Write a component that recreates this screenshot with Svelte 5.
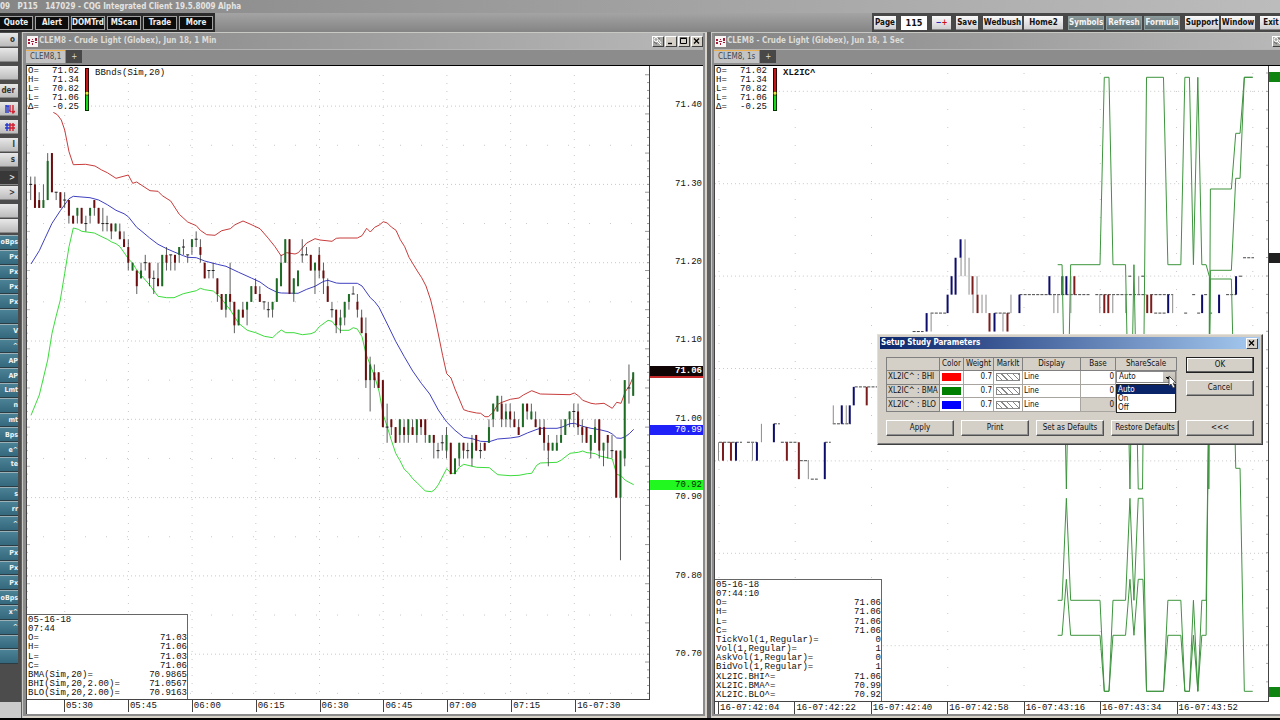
<script lang="ts">
  type Point = [number, number];
  // open, close, high, low in cents above 70.00
  type Bar = [number, number, number, number];

  const MENU = ['Quote', 'Alert', 'DOMTrd', 'MScan', 'Trade', 'More'];

  const SIDE_BUTTONS = [
    { label: 'o' },
    { label: '' },
    { label: '', gap: true },
    { label: 'der', gap: true },
    { label: '', icon: 'arrows', gap: true },
    { label: '', icon: 'hash', gap: true },
    { label: 'l', gap: true },
    { label: 's' },
    { label: '>', dark: true, gap: true },
    { label: '>' },
    { label: '', gap: true },
    { label: '' },
  ];

  const STUDIES = [
    'oBps', 'Px', 'Px', 'Px', 'Px', '', 'V', '^', 'AP', 'AP', 'Lmt', 'n', 'mt', 'Bps', 'e^',
    'te', '', 's', 'rr', '^', '', 'Px', 'Px', 'Px', 'oBps', 'x^', '^', '', '',
  ];

  const QUOTE = [
    ['O=', '71.02'],
    ['H=', '71.34'],
    ['L=', '70.82'],
    ['L=', '71.06'],
    ['Δ=', '-0.25'],
  ];

  const READOUT_MIN = [
    ['05-16-18', ''],
    ['07:44', ''],
    ['O=', '71.03'],
    ['H=', '71.06'],
    ['L=', '71.03'],
    ['C=', '71.06'],
    ['BMA(Sim,20)=', '70.9865'],
    ['BHI(Sim,20,2.00)=', '71.0567'],
    ['BLO(Sim,20,2.00)=', '70.9163'],
  ];

  const READOUT_SEC = [
    ['05-16-18', ''],
    ['07:44:10', ''],
    ['O=', '71.06'],
    ['H=', '71.06'],
    ['L=', '71.06'],
    ['C=', '71.06'],
    ['TickVol(1,Regular)=', '0'],
    ['Vol(1,Regular)=', '1'],
    ['AskVol(1,Regular)=', '0'],
    ['BidVol(1,Regular)=', '1'],
    ['XL2IC.BHI^=', '71.06'],
    ['XL2IC.BMA^=', '70.99'],
    ['XL2IC.BLO^=', '70.92'],
  ];

  const TIMES_MIN = ['05:30', '05:45', '06:00', '06:15', '06:30', '06:45', '07:00', '07:15', '16-07:30'];
  const TIMES_SEC = ['42:04', '42:22', '42:40', '42:58', '43:16', '43:34', '43:52'];

  const BARS: Bar[] = [
    [130, 130, 131, 128], [130, 127, 131, 127], [128, 127, 129, 127], [127, 128, 130, 127],
    [128, 133, 134, 128], [134, 129, 134, 129], [129, 129, 129, 128], [129, 127, 129, 127],
    [128, 128, 129, 127], [128, 126, 128, 125], [126, 125, 126, 125], [126, 127, 127, 125],
    [127, 125, 127, 125], [125, 125, 126, 124], [126, 127, 127, 125], [128, 127, 128, 126],
    [127, 125, 127, 125], [125, 125, 127, 124], [125, 125, 126, 124], [125, 124, 125, 123],
    [124, 125, 125, 124], [124, 123, 125, 123], [123, 122, 124, 122], [122, 120, 123, 119],
    [119, 120, 120, 119], [119, 117, 119, 116], [118, 119, 120, 118], [120, 120, 121, 119],
    [120, 118, 120, 117], [118, 118, 119, 116], [118, 117, 120, 117], [117, 121, 121, 117],
    [121, 120, 122, 119], [121, 121, 121, 119], [121, 120, 121, 119], [121, 122, 122, 120],
    [122, 122, 123, 121], [121, 121, 121, 120], [122, 123, 123, 121], [123, 123, 124, 122],
    [122, 121, 123, 120], [120, 118, 120, 118], [119, 119, 119, 118], [119, 119, 120, 118],
    [118, 116, 118, 115], [116, 114, 116, 114], [114, 116, 116, 113], [116, 115, 120, 114],
    [115, 112, 115, 111], [112, 114, 114, 112], [114, 113, 115, 113], [114, 115, 115, 112],
    [115, 117, 117, 115], [117, 116, 118, 116], [116, 115, 117, 115], [115, 115, 115, 114],
    [114, 114, 115, 113], [114, 115, 115, 113], [115, 118, 118, 115], [117, 120, 121, 117],
    [120, 123, 123, 120], [123, 116, 123, 116], [116, 118, 118, 115], [117, 119, 119, 117],
    [121, 121, 123, 120], [121, 121, 122, 121], [121, 119, 121, 119], [119, 120, 120, 116],
    [121, 119, 122, 118], [119, 118, 120, 116], [117, 115, 118, 115], [114, 114, 115, 113],
    [114, 112, 114, 111], [112, 113, 114, 111], [113, 115, 115, 112], [115, 116, 116, 114],
    [116, 116, 117, 116], [115, 114, 116, 113], [113, 111, 114, 111], [111, 105, 113, 104],
    [105, 107, 108, 101], [106, 105, 107, 104], [106, 104, 106, 104], [105, 99, 105, 99],
    [99, 99, 102, 97], [100, 99, 100, 98], [99, 97, 99, 97], [98, 100, 100, 97],
    [99, 98, 100, 97], [98, 100, 100, 97], [99, 98, 100, 98], [98, 100, 100, 97],
    [100, 99, 100, 98], [100, 98, 100, 97], [97, 98, 98, 97], [98, 97, 98, 95],
    [96, 96, 97, 95], [97, 97, 98, 96], [96, 98, 99, 95], [97, 93, 97, 93],
    [93, 95, 95, 93], [95, 97, 97, 94], [97, 96, 97, 95], [96, 96, 97, 95],
    [95, 97, 98, 94], [98, 96, 98, 96], [96, 96, 97, 95], [97, 96, 97, 96],
    [97, 99, 100, 97], [100, 102, 102, 99], [101, 103, 103, 101], [102, 100, 103, 99],
    [100, 101, 102, 99], [101, 100, 102, 99], [100, 99, 101, 99], [99, 98, 100, 98],
    [99, 102, 102, 99], [102, 101, 102, 100], [100, 101, 102, 100], [100, 99, 101, 99],
    [99, 98, 100, 98], [99, 97, 100, 96], [97, 96, 98, 94], [96, 97, 97, 96],
    [96, 97, 98, 96], [97, 98, 100, 97], [98, 100, 100, 98], [100, 101, 101, 99],
    [101, 101, 102, 99], [101, 99, 102, 98], [99, 98, 100, 97], [99, 97, 99, 97],
    [96, 98, 98, 95], [97, 99, 100, 97], [100, 96, 100, 95], [96, 97, 97, 94],
    [98, 97, 98, 95], [96, 96, 98, 95], [96, 90, 96, 90], [90, 96, 96, 82],
    [95, 105, 105, 94], [104, 104, 107, 102], [103, 106, 106, 103],
  ];

  // Band points are kept at three units per plot pixel, split at 06:33
  const BHI_EARLY: Point[] = [
    [100, 7], [112, 14], [124, 30], [134, 60], [147, 125], [160, 164], [197, 163], [225, 168],
    [245, 180], [262, 188], [288, 205], [325, 195], [338, 220], [350, 216], [390, 242], [414, 244],
    [427, 257], [452, 273], [478, 313], [503, 336], [529, 347], [541, 361], [560, 374], [585, 376],
    [605, 362], [631, 356], [645, 344], [669, 333], [690, 342], [720, 356], [745, 385], [765, 410],
    [783, 437], [800, 428], [825, 432], [835, 428], [860, 399], [885, 386], [900, 390], [936, 394],
    [949, 385],
  ];
  const BHI_LATE: Point[] = [
    [0, 84], [52, 84], [66, 77], [80, 55], [91, 66], [104, 52], [118, 45], [130, 35], [142, 39],
    [154, 51], [168, 61], [181, 89], [194, 110], [207, 142], [232, 183], [245, 203], [258, 228],
    [272, 270], [283, 315], [295, 372], [308, 437], [320, 491], [333, 504], [345, 537], [371, 599],
    [385, 604], [410, 609], [422, 610], [435, 620], [445, 620], [460, 607], [473, 583], [486, 577],
    [511, 568], [537, 564], [550, 555], [575, 542], [601, 552], [690, 554], [703, 549], [716, 558],
    [728, 571], [753, 580], [767, 582], [792, 580], [817, 595], [830, 577], [843, 580], [856, 545],
    [868, 528], [881, 498],
  ];
  const BMA_EARLY: Point[] = [
    [33, 462], [58, 422], [75, 385], [96, 340], [121, 302], [147, 266], [160, 259], [210, 263],
    [236, 270], [262, 284], [288, 301], [312, 311], [325, 320], [350, 352], [363, 362], [389, 384],
    [414, 403], [440, 416], [465, 427], [490, 437], [503, 442], [529, 443], [554, 453], [592, 463],
    [618, 469], [656, 487], [694, 504], [720, 516], [745, 534], [771, 547], [784, 549], [834, 550],
    [860, 538], [885, 529], [911, 514], [924, 511], [949, 519],
  ];
  const BMA_LATE: Point[] = [
    [0, 220], [52, 220], [66, 228], [91, 263], [104, 275], [117, 292], [142, 342], [167, 394],
    [193, 440], [218, 483], [244, 520], [269, 552], [295, 600], [320, 636], [345, 661], [371, 682],
    [397, 686], [422, 694], [448, 695], [473, 687], [511, 684], [537, 680], [562, 669], [588, 659],
    [601, 655], [651, 655], [664, 652], [690, 641], [703, 640], [728, 649], [753, 655], [779, 659],
    [804, 665], [817, 672], [830, 684], [843, 685], [856, 680], [868, 671], [881, 658],
  ];
  const BLO_EARLY: Point[] = [
    [33, 916], [58, 855], [83, 750], [96, 670], [108, 620], [121, 570], [134, 490], [147, 410],
    [160, 354], [175, 358], [185, 364], [223, 369], [249, 382], [262, 388], [275, 396], [288, 401],
    [300, 410], [325, 446], [338, 460], [350, 480], [389, 525], [414, 559], [440, 563], [462, 563],
    [490, 551], [529, 542], [541, 535], [554, 539], [580, 543], [600, 561], [631, 600], [656, 640],
    [682, 661], [707, 668], [733, 679], [758, 683], [771, 670], [784, 660], [797, 668], [822, 668],
    [847, 674], [873, 671], [885, 666], [898, 650], [924, 631], [936, 634], [949, 650],
  ];
  const BLO_LATE: Point[] = [
    [0, 361], [27, 361], [40, 353], [52, 357], [66, 380], [78, 432], [91, 465], [104, 500],
    [117, 543], [130, 615], [142, 651], [154, 690], [167, 730], [180, 752], [193, 778], [206, 790],
    [218, 806], [231, 818], [256, 843], [275, 845], [285, 838], [295, 824], [320, 776], [333, 790],
    [345, 790], [358, 772], [371, 763], [410, 772], [448, 773], [473, 794], [511, 797], [537, 796],
    [562, 791], [575, 790], [590, 766], [601, 759], [651, 757], [664, 750], [690, 730], [715, 727],
    [728, 723], [741, 728], [753, 729], [766, 731], [779, 738], [817, 747], [830, 793], [843, 797],
    [856, 811], [881, 824],
  ];

  // One-second study lines, same three units per pixel
  const XL_HIGH: Point[] = [
    [82, 614], [95, 614], [108, 1287], [121, 614], [209, 614], [222, 52], [236, 52], [248, 614],
    [286, 614], [299, 1287], [311, 614], [324, 1287], [337, 1287], [349, 52], [400, 52], [413, 614],
    [452, 614], [464, 52], [478, 52], [490, 614], [503, 52], [515, 614], [528, 614], [538, 650],
    [536, 1287], [541, 387], [604, 387], [617, 220], [630, 220], [643, 52], [668, 52],
  ];
  const XL_MID: Point[] = [
    [82, 1726], [95, 1726], [108, 1558], [121, 1726], [209, 1726], [222, 1894], [236, 1894],
    [248, 1726], [286, 1726], [299, 1558], [311, 1726], [324, 1558], [338, 1558], [349, 1894],
    [400, 1894], [413, 1726], [452, 1726], [464, 1894], [478, 1894], [490, 1726], [503, 1894],
    [515, 1726], [528, 1726], [541, 631], [604, 631], [617, 355], [630, 355], [643, 52], [668, 52],
  ];
  const XL_LOW: Point[] = [
    [82, 1621], [95, 1621], [108, 1315], [121, 1621], [209, 1621], [222, 1894], [236, 1894],
    [248, 1621], [286, 1621], [299, 1315], [311, 1621], [324, 1315], [338, 1315], [349, 1894],
    [400, 1894], [413, 1621], [452, 1621], [464, 1894], [478, 1894], [490, 1621], [503, 1894],
    [515, 1621], [528, 1621], [541, 657], [604, 657], [617, 1225], [630, 1225], [643, 1894],
    [668, 1894],
  ];

  // x, top level, bottom level, colour key
  const SEC_BARS: [number, number, number, string][] = [
    [717, 11, 12, 'g'], [721, 11, 12, 'r'], [729, 11, 12, 'r'], [734, 11, 12, 'b'],
    [751, 11, 12, 'g'], [755, 11, 12, 'b'], [760, 10, 11, 'g'], [772, 10, 11, 'b'],
    [785, 11, 12, 'r'], [797, 11, 13, 'r'], [807, 12, 13, 'g'], [823, 11, 13, 'b'],
    [832, 9, 10, 'g'], [840, 9, 10, 'b'], [845, 9, 10, 'g'], [848, 9, 10, 'b'],
    [852, 8, 9, 'b'], [865, 8, 9, 'r'], [925, 4, 5, 'b'], [930, 4, 5, 'g'],
    [946, 3, 4, 'b'], [950, 2, 3, 'b'], [954, 1, 3, 'b'], [959, 0, 1, 'b'],
    [960, 1, 2, 'g'], [964, 0, 2, 'g'], [968, 1, 3, 'g'], [971, 2, 3, 'r'],
    [972, 3, 4, 'g'], [976, 2, 3, 'g'], [976, 3, 4, 'r'], [981, 3, 4, 'g'],
    [985, 3, 4, 'g'], [988, 4, 5, 'r'], [993, 4, 5, 'b'], [1002, 4, 5, 'g'],
    [1006, 4, 5, 'r'], [1010, 3, 4, 'g'], [1018, 3, 4, 'b'], [1048, 2, 3, 'b'],
    [1053, 3, 4, 'g'], [1057, 3, 4, 'g'], [1061, 2, 3, 'b'], [1065, 2, 3, 'b'],
    [1070, 2, 4, 'g'], [1073, 2, 3, 'r'], [1099, 3, 4, 'g'], [1103, 3, 4, 'r'],
    [1107, 3, 4, 'r'], [1112, 3, 4, 'g'], [1125, 3, 4, 'g'], [1138, 2, 3, 'g'],
    [1146, 3, 4, 'r'], [1150, 3, 4, 'r'], [1167, 3, 4, 'b'], [1172, 3, 4, 'g'],
    [1201, 3, 4, 'b'], [1218, 3, 4, 'b'], [1235, 2, 3, 'b'],
  ];
  const SEC_COLORS: Record<string, string> = { r: '#7c1c1c', b: '#0c0c6c', g: '#8c8c8c' };

  // runs of unchanged prices: from, to, level
  const FLATS: [number, number, number][] = [
    [718, 741, 11], [746, 756, 11], [773, 779, 10], [780, 797, 11], [799, 808, 12],
    [810, 817, 13], [824, 830, 11], [832, 850, 10], [854, 878, 8], [912, 923, 5],
    [930, 946, 4], [994, 1010, 4], [1019, 1090, 3], [1095, 1146, 3], [1150, 1173, 3],
    [1192, 1196, 3], [1204, 1208, 3], [1226, 1236, 3], [1154, 1166, 4], [1184, 1187, 4],
    [1197, 1201, 4], [1210, 1212, 4], [1128, 1131, 2], [1141, 1145, 2], [1239, 1242, 2],
    [1243, 1254, 1],
  ];

  const PLOT_TOP = 66;
  const PLOT_HEIGHT = 633;

  const barX = (n: number) => 30.7 + n * 4.243;
  const priceY = (cents: number) => 419.3 + (100 - cents) * 7.83;
  const levelY = (level: number) => 239.3 + level * 18.45;
  const fromTop = (y: number) => `${((y - PLOT_TOP) / PLOT_HEIGHT) * 100}%`;

  function trace(points: Point[], left: number, top: number): string {
    return points.map(([x, y]) => `${(left + x / 3).toFixed(1)},${(top + y / 3).toFixed(1)}`).join(' ');
  }

  const bands = [
    { color: '#c83c3c', points: trace(BHI_EARLY, 20, 110) + ' ' + trace(BHI_LATE, 340, 210) },
    { color: '#4040c0', points: trace(BMA_EARLY, 20, 110) + ' ' + trace(BMA_LATE, 340, 210) },
    { color: '#3cdc3c', points: trace(BLO_EARLY, 20, 110) + ' ' + trace(BLO_LATE, 340, 210) },
  ];

  const priceLabels = [140, 130, 120, 110, 100, 90, 80, 70];
  const markers = [
    { text: '71.06', y: 372, kind: 'last' },
    { text: '70.99', y: 429, kind: 'mid' },
    { text: '70.92', y: 484, kind: 'low' },
  ];

  const params = [
    { name: 'XL2IC^ : BHI', color: '#ff0000' },
    { name: 'XL2IC^ : BMA', color: '#008000' },
    { name: 'XL2IC^ : BLO', color: '#0000ff' },
  ];
  const SCALES = ['Auto', 'On', 'Off'];

  let page = $state('115');
  let scale = $state('Auto');
</script>

{#snippet logo()}
  <svg class="logo" viewBox="0 0 11 11" aria-hidden="true">
    <rect width="11" height="11" fill="#f8f4f4" />
    <path d="M1 3h2v2H1zM1 6h2v2H1zM4 5h3v1H4zM5 3h1v1H5zM8 2h2v3H8zM5 7h1v2H5zM8 6h2v1H8z" fill="#a81838" />
  </svg>
{/snippet}

{#snippet pin()}
  <svg viewBox="0 0 11 10" aria-hidden="true">
    <circle cx="4" cy="3.5" r="2" fill="none" stroke="#fff" />
    <path d="M5 5l4 4M7 4l2 3" fill="none" stroke="#fff" />
    <path d="M2 6l3 2M6 2l2 1" stroke="#666" />
  </svg>
{/snippet}

{#snippet quoteBox()}
  <div class="quote">
    <div class="quote-rows">
      {#each QUOTE as [label, value]}
        <div class="pair"><span>{label}</span><span>{value}</span></div>
      {/each}
    </div>
    <svg class="range" viewBox="0 0 4 43" aria-hidden="true">
      <rect x="0.5" y="0.5" width="3" height="42" fill="#c01818" stroke="#300" />
      <rect x="0.5" y="25.5" width="3" height="17" fill="#18d818" stroke="#030" />
      <path d="M0 25l2-2 2 2-2 3z" fill="#e8e840" stroke="#330" stroke-width="0.6" />
    </svg>
  </div>
{/snippet}

{#snippet readout(rows: string[][])}
  {#each rows as [label, value]}
    <div class="pair"><span>{label}</span><span>{value}</span></div>
  {/each}
{/snippet}

<div class="client">
  <header class="titlebar">09&nbsp;&nbsp; P115&nbsp;&nbsp; 147029 - CQG Integrated Client 19.5.8009 Alpha</header>

  <nav class="toolbar">
    <div class="menu">
      {#each MENU as item}
        <button>{item}</button>
      {/each}
    </div>
    <div class="tools">
      <button class="narrow">Page</button>
      <input class="page" aria-label="Page number" bind:value={page} />
      <button class="step" aria-label="Step page"><span class="minus">−</span><span class="plus">+</span></button>
      <button class="narrow">Save</button>
      <span class="pack">
        <button>Wedbush</button>
        <button>Home2</button>
      </span>
      <span class="pack slate">
        <button>Symbols</button>
        <button>Refresh</button>
        <button>Formula</button>
      </span>
      <span class="pack plain">
        <button>Support</button>
        <button>Window</button>
      </span>
      <button class="narrow">Exit</button>
    </div>
  </nav>

  <main class="desk">
    <aside class="side">
      <div class="side-top">
        {#each SIDE_BUTTONS as item}
          <button class="side-button" class:gap={item.gap} class:dark={item.dark} aria-label={item.label || 'Tool'}>
            {#if item.icon === 'arrows'}
              <svg viewBox="0 0 10 10" aria-hidden="true">
                <path d="M1 1v8M3 2v7M1 2h3" stroke="#2438d0" stroke-width="1.4" fill="none" />
                <path d="M5 1v7M8 1v8M4 6l2 2M7 7l1 2 2-2" stroke="#d02030" stroke-width="1.4" fill="none" />
              </svg>
            {:else if item.icon === 'hash'}
              <svg viewBox="0 0 10 10" aria-hidden="true">
                <path d="M2 1v8M0 3h5M0 6h5" stroke="#2438d0" stroke-width="1.4" fill="none" />
                <path d="M5 1v8M8 1v8M4 3h6M4 6h6" stroke="#d02030" stroke-width="1.4" fill="none" />
              </svg>
            {:else}
              {item.label}
            {/if}
          </button>
        {/each}
      </div>
      <div class="studies">
        {#each STUDIES as study}
          <button class="study" aria-label={study || 'Study'}>{study}</button>
        {/each}
      </div>
      <div class="side-end"></div>
    </aside>

    <section class="window">
      <div class="caption">
        {@render logo()}
        <h2>CLEM8 - Crude Light (Globex), Jun 18, 1 Min</h2>
        <div class="controls">
          <button class="pin" aria-label="Pin">{@render pin()}</button>
          <button aria-label="Minimize"><svg viewBox="0 0 11 10"><path d="M3 7.5h4" stroke="#000" stroke-width="1.4" /></svg></button>
          <button aria-label="Maximize"><svg viewBox="0 0 11 10"><path d="M2.5 2.5h6v5h-6zM2 2h7" fill="none" stroke="#000" /></svg></button>
          <button aria-label="Close"><svg viewBox="0 0 11 10"><path d="M3 2.5l5 5M8 2.5l-5 5" stroke="#000" stroke-width="1.3" /></svg></button>
        </div>
      </div>
      <div class="tabs">
        <button class="tab">CLEM8,1</button>
        <button class="add">+</button>
      </div>
      <div class="chart">
        <div class="plot">
          <svg class="canvas" viewBox="27 66 622 633" preserveAspectRatio="none" aria-label="One minute candles">
            {#each priceLabels as cents}
              <line x1="27" x2="649" y1={priceY(cents)} y2={priceY(cents)} class="grid" />
              <line x1="43" x2="649" y1={priceY(cents - 5)} y2={priceY(cents - 5)} class="grid sparse" />
            {/each}
            {#each TIMES_MIN as _, i}
              <line x1={64.7 + i * 63.7} x2={64.7 + i * 63.7} y1="75" y2="699" class="grid upright" />
            {/each}
            {#each { length: 81 } as _, i}
              <line x1={i % 5 ? 647 : 645} x2="649" y1={priceY(144 - i)} y2={priceY(144 - i)} stroke="#999" />
              <line x1="27" x2={i % 5 ? 28 : 30} y1={priceY(144 - i)} y2={priceY(144 - i)} stroke="#bbb" />
            {/each}
            {#each bands as band}
              <polyline points={band.points} fill="none" stroke={band.color} />
            {/each}
            {#each BARS as [open, close, high, low], n}
              <line x1={barX(n)} x2={barX(n)} y1={priceY(high)} y2={priceY(low)} stroke="#333" stroke-width="0.8" />
              {#if open === close}
                <line x1={barX(n) - 1.5} x2={barX(n) + 1.5} y1={priceY(open)} y2={priceY(open)} stroke="#222" />
              {:else}
                <rect
                  x={barX(n) - 1}
                  y={priceY(Math.max(open, close))}
                  width="2"
                  height={Math.abs(open - close) * 7.83}
                  fill={close > open ? '#1c6c24' : '#6c0c0c'}
                />
              {/if}
            {/each}
          </svg>
          {@render quoteBox()}
          <div class="study-name">BBnds(Sim,20)</div>
          <div class="readout minute">{@render readout(READOUT_MIN)}</div>
        </div>
        <div class="prices">
          {#each priceLabels as cents}
            <span class="price" style:top={fromTop(priceY(cents) - 1)}>{(70 + cents / 100).toFixed(2)}</span>
          {/each}
          {#each markers as marker}
            <span class="price marker {marker.kind}" style:top={fromTop(marker.y)}>{marker.text}</span>
          {/each}
        </div>
        <div class="times minute-times">
          {#each TIMES_MIN as time}
            <span>{time}</span>
          {/each}
        </div>
      </div>
    </section>

    <section class="window second">
      <div class="caption">
        {@render logo()}
        <h2>CLEM8 - Crude Light (Globex), Jun 18, 1 Sec</h2>
        <div class="controls">
          <button class="pin" aria-label="Pin">{@render pin()}</button>
        </div>
      </div>
      <div class="tabs">
        <button class="tab">CLEM8, 1s</button>
        <button class="add">+</button>
      </div>
      <div class="chart">
        <div class="plot">
          <svg class="canvas" viewBox="714 66 554 635" preserveAspectRatio="none" aria-label="One second bars">
            {#each { length: 7 } as _, i}
              <line x1="714" x2="1268" y1={91.3 + i * 92.4} y2={91.3 + i * 92.4} class="grid" />
            {/each}
            {#each { length: 8 } as _, i}
              <line x1={718 + i * 76.4} x2={718 + i * 76.4} y1="73" y2="701" class="grid levels" />
            {/each}
            {#each { length: 34 } as _, i}
              <line x1="1266" x2="1268" y1={73 + i * 18.45} y2={73 + i * 18.45} stroke="#aaa" />
            {/each}
            {#each FLATS as [from, to, level]}
              <line x1={from} x2={to} y1={levelY(level)} y2={levelY(level)} stroke="#444" stroke-dasharray="3 1.2" />
            {/each}
            {#each SEC_BARS as [x, top, bottom, color]}
              <rect
                {x}
                y={levelY(top)}
                width={color === 'g' ? 1 : 2}
                height={levelY(bottom) - levelY(top)}
                fill={SEC_COLORS[color]}
              />
            {/each}
            {#each [XL_HIGH, XL_MID, XL_LOW] as line}
              <polyline points={trace(line, 1030, 60)} fill="none" stroke="#3c943c" />
            {/each}
          </svg>
          {@render quoteBox()}
          <div class="study-name heavy">XL2IC^</div>
          <div class="readout seconds">{@render readout(READOUT_SEC)}</div>
        </div>
        <div class="prices">
          <span class="price marker study-mark" style:top={fromTop(77)}></span>
          <span class="price marker dark-mark" style:top={fromTop(257)}></span>
          <span class="price marker study-mark" style:top={fromTop(689)}></span>
        </div>
        <div class="times second-times">
          {#each TIMES_SEC as time}
            <span>16-07:{time}</span>
          {/each}
        </div>
      </div>
    </section>
  </main>

  <div class="dialog" role="dialog" aria-labelledby="dialog-title">
    <div class="dialog-caption">
      <h2 id="dialog-title">Setup Study Parameters</h2>
      <button aria-label="Close"><svg viewBox="0 0 11 10"><path d="M3 2.5l5 5M8 2.5l-5 5" stroke="#000" stroke-width="1.3" /></svg></button>
    </div>
    <div class="dialog-body">
      <table>
        <thead>
          <tr>
            <th class="name"></th>
            <th class="color">Color</th>
            <th class="weight">Weight</th>
            <th class="mark">MarkIt</th>
            <th class="display">Display</th>
            <th class="base">Base</th>
            <th>ShareScale</th>
          </tr>
        </thead>
        <tbody>
          {#each params as param, i}
            <tr>
              <th scope="row">{param.name}</th>
              <td><span class="swatch" style:background={param.color}></span></td>
              <td class="number">0.7</td>
              <td><span class="hatch"></span></td>
              <td>Line</td>
              <td class="number" class:disabled={i === 2}>0</td>
              {#if i === 0}
                <td class="scale-cell">
                  <select aria-label="ShareScale" bind:value={scale}>
                    {#each SCALES as option}
                      <option>{option}</option>
                    {/each}
                  </select>
                  <ul class="options">
                    {#each SCALES as option}
                      <li class:selected={option === scale}>{option}</li>
                    {/each}
                  </ul>
                  <svg class="cursor" viewBox="0 0 9 14" aria-hidden="true">
                    <path d="M1 1v10l2-2 2 4 2-1-2-4h3z" fill="#fff" stroke="#333" stroke-width="0.8" />
                  </svg>
                </td>
              {:else}
                <td></td>
              {/if}
            </tr>
          {/each}
        </tbody>
      </table>
      <div class="answers">
        <button class="default">OK</button>
        <button>Cancel</button>
      </div>
    </div>
    <div class="actions">
      <button>Apply</button>
      <button>Print</button>
      <button>Set as Defaults</button>
      <button>Restore Defaults</button>
      <button>&lt;&lt;&lt;</button>
    </div>
  </div>
</div>

<style>
  :global(body) {
    margin: 0;
    overflow: hidden;
    background: #000;
  }

  .client {
    position: relative;
    display: flex;
    flex-direction: column;
    height: 100vh;
    overflow: hidden;
    background: #3c3c3c;
    font-family: "DejaVu Sans Condensed", "Noto Sans", sans-serif;
    font-size: 8px;
    line-height: 10px;
    color: #111;
  }

  .client * {
    box-sizing: border-box;
  }

  button,
  input,
  select {
    margin: 0;
    padding: 0;
    border: 0;
    border-radius: 0;
    font: inherit;
    color: inherit;
    white-space: nowrap;
  }

  h2 {
    margin: 0;
    font-size: inherit;
  }

  .titlebar {
    height: 13px;
    flex: none;
    line-height: 13px;
    font-weight: bold;
    color: #e4e4e0;
    white-space: nowrap;
    background: linear-gradient(90deg, #868686, #bcbcbc);
  }

  .toolbar {
    display: flex;
    flex: none;
    height: 19px;
    font-weight: bold;
    background: linear-gradient(#a4a4a4, #848484);
  }

  .menu {
    display: flex;
    gap: 2px;
    padding: 3px 2px 2px 0;
    background: #2c2c2c;
  }

  .menu button {
    width: 34px;
    color: #f0f0f0;
    background: #0c0c0c;
    border: 1px solid #a0a0a0;
  }

  .menu button:first-child {
    width: 33px;
    border-left: 0;
  }

  .tools {
    display: flex;
    gap: 5px;
    padding: 3px 2px 2px;
    margin: 0 -4px 0 auto;
    background: #484848;
  }

  .tools button {
    width: 39px;
    height: 14px;
    background: linear-gradient(#fafafa, #cfcfd2);
    border-bottom: 1px solid #888;
  }

  .tools .narrow {
    width: 22px;
  }

  .tools .page {
    width: 26px;
    height: 14px;
    text-align: center;
    font-size: 9px;
    background: #fff;
  }

  .tools .step {
    width: 19px;
  }

  .minus {
    color: #2828c0;
  }

  .plus {
    color: #d01010;
  }

  .pack {
    display: flex;
    gap: 2px;
  }

  .pack.slate button {
    width: 36px;
    color: #f4f4f4;
    background: linear-gradient(#8a9898, #5c6e72);
    border: 1px solid #8c9c9c;
  }

  .pack.plain button {
    width: 34px;
  }

  .desk {
    display: grid;
    grid-template-columns: 21px minmax(0, 689fr) minmax(0, 570fr);
    flex: 1;
    min-height: 0;
    padding-bottom: 2px;
    background: #000;
  }

  .side {
    display: flex;
    flex-direction: column;
    padding-right: 3px;
    font-weight: bold;
    background: #4c4c4c;
  }

  .side-top {
    display: flex;
    flex-direction: column;
    gap: 1px;
    padding-top: 1px;
  }

  .side button {
    display: flex;
    align-items: center;
    justify-content: flex-end;
    width: 18px;
    text-align: right;
  }

  .side-button {
    height: 14px;
    padding-right: 3px;
    color: #333;
    background: linear-gradient(#e8e8e8, #bcbcbc);
    border-bottom: 1px solid #888;
  }

  .side-button.gap {
    margin-top: 3px;
  }

  .side-button.dark {
    color: #ddd;
    background: #383838;
  }

  .side-button svg {
    width: 10px;
    height: 10px;
    flex: none;
  }

  .studies {
    display: flex;
    flex-direction: column;
    height: 429px;
    margin-top: 2px;
  }

  .study {
    flex: 1;
    font-size: 7px;
    color: #f0f4f6;
    background: linear-gradient(#4c8296, #34687c);
    border-top: 1px solid #9cb0b8;
    border-bottom: 1px solid #2c3c44;
  }

  .side-end {
    height: 16px;
    margin: auto -3px 0 0;
    background: #cacaca;
  }

  .window {
    display: flex;
    flex-direction: column;
    min-width: 0;
    padding: 1px 4px 4px;
    background: #8c8c8c;
    border: 1px solid #606060;
    border-width: 0 3px 0 1px;
    box-shadow: inset 1px 1px 0 #c8c8c4, inset -2px -2px 0 #d8d4cc;
  }

  .second {
    padding: 1px 0 4px 3px;
    border-right: 0;
    box-shadow: inset 1px 1px 0 #c8c8c4, inset 0 -2px 0 #d8d4cc;
    overflow: hidden;
  }

  .caption {
    display: flex;
    align-items: center;
    gap: 1px;
    height: 17px;
    flex: none;
    padding-left: 1px;
    border-bottom: 1px solid #b4b4b4;
    background: linear-gradient(90deg, #848484, #b8b8b8);
    color: #dcdcd8;
    white-space: nowrap;
  }

  .logo {
    width: 11px;
    height: 11px;
  }

  .controls {
    display: flex;
    gap: 2px;
    margin-left: auto;
    padding-right: 1px;
  }

  .second .controls {
    margin-right: -4px;
  }

  .controls button,
  .dialog-caption button {
    display: flex;
    width: 11px;
    height: 10px;
    background: #d4d0c8;
    box-shadow: 1px 1px 0 #404040, inset 1px 1px 0 #fff;
  }

  .controls .pin {
    background: #a8a8a4;
  }

  .tabs {
    display: flex;
    align-items: flex-end;
    gap: 1px;
    flex: none;
    height: 15px;
    padding-bottom: 2px;
  }

  .tab {
    height: 13px;
    padding: 0 4px;
    color: #404850;
    background: #c4c4c4;
    border-top: 1px solid #e8b050;
  }

  .add {
    width: 16px;
    height: 13px;
    color: #ddd;
    background: #484848;
  }

  .chart {
    display: grid;
    grid-template-columns: minmax(0, 1fr) 53px;
    grid-template-rows: minmax(0, 1fr) 14px;
    flex: 1;
    min-height: 0;
    background: #fff;
    border-top: 1px solid #000;
    border-left: 1px solid #444;
    font-family: "Liberation Mono", monospace;
    font-size: 9px;
    line-height: 9px;
  }

  .second .chart {
    grid-template-columns: minmax(0, 1fr) 11px;
    grid-template-rows: minmax(0, 1fr) 12px;
  }

  .plot {
    position: relative;
    border-right: 1px solid #444;
    border-bottom: 1px solid #444;
  }

  .canvas {
    position: absolute;
    width: 100%;
    height: 100%;
  }

  .grid {
    stroke: #c8c8c8;
    stroke-dasharray: 1 3;
  }

  .grid.sparse {
    stroke-dasharray: 1 20;
  }

  .grid.upright {
    stroke-dasharray: 1 7;
  }

  .grid.levels {
    stroke-dasharray: 1 17;
  }

  .pair {
    display: flex;
    justify-content: space-between;
    white-space: pre;
  }

  .quote {
    position: absolute;
    top: 1px;
    left: 1px;
    display: flex;
    gap: 6px;
    background: #fff;
  }

  .quote-rows {
    width: 51px;
  }

  .range {
    width: 4px;
    height: 43px;
    margin-top: 1px;
  }

  .study-name {
    position: absolute;
    top: 3px;
    left: 68px;
  }

  .study-name.heavy {
    font-weight: bold;
  }

  .readout {
    position: absolute;
    left: 0;
    bottom: 0;
    display: flex;
    flex-direction: column;
    justify-content: space-between;
    padding: 1px 0 1px 1px;
    background: #fff;
    border: 1px solid #666;
    border-width: 1px 1px 0 0;
  }

  .readout.minute {
    width: 161px;
    height: 85px;
  }

  .readout.seconds {
    width: 167px;
    height: 122px;
  }

  .prices {
    position: relative;
  }

  .price {
    position: absolute;
    right: 1px;
    transform: translateY(-50%);
  }

  .marker {
    left: 0;
    right: 0;
    height: 10px;
    padding-right: 1px;
    line-height: 10px;
    text-align: right;
  }

  .marker.last {
    height: 12px;
    color: #fff;
    font-weight: bold;
    background: #100404;
    border-bottom: 2px solid #c42828;
  }

  .marker.mid {
    color: #fff;
    background: #2020f8;
  }

  .marker.low {
    color: #042c04;
    background: #20f820;
  }

  .marker.study-mark {
    background: #108410;
  }

  .marker.dark-mark {
    background: #202020;
  }

  .times {
    display: flex;
    grid-column: 1;
  }

  .times span {
    flex: 1 1 0;
    min-width: 0;
    height: 12px;
    padding-left: 1px;
    line-height: 12px;
    white-space: nowrap;
    border-left: 1px solid #444;
  }

  .minute-times {
    margin: 0 11px 0 37px;
  }

  .second-times {
    margin: 0 16px 0 3px;
  }

  .dialog {
    position: absolute;
    top: 334px;
    right: 17px;
    width: 386px;
    padding: 2px;
    background: #d4d0c8;
    border: 1px solid #e4e0d8;
    border-right-color: #404040;
    border-bottom-color: #404040;
    box-shadow: inset -1px -1px 0 #808080;
  }

  .dialog-caption {
    display: flex;
    align-items: center;
    justify-content: space-between;
    height: 12px;
    padding: 0 3px 0 1px;
    color: #fff;
    background: linear-gradient(90deg, #0a246a, #a6caf0);
  }

  .dialog-body {
    display: flex;
    justify-content: space-between;
    padding: 8px 6px 0;
  }

  table {
    width: 291px;
    height: 55px;
    table-layout: fixed;
    border-collapse: collapse;
    border: 1px solid #606060;
  }

  th,
  td {
    height: 13px;
    padding: 0 1px;
    border: 1px solid #a8a4a0;
    white-space: nowrap;
    text-align: left;
  }

  th {
    font-weight: normal;
    background: #d4d0c8;
    border-color: #808080;
  }

  thead th {
    text-align: center;
  }

  td {
    background: #fff;
  }

  .name {
    width: 53px;
  }

  .color {
    width: 24px;
  }

  .weight {
    width: 30px;
  }

  .mark {
    width: 29px;
  }

  .display {
    width: 58px;
  }

  .base {
    width: 35px;
  }

  .number {
    text-align: right;
  }

  .disabled {
    background: #d4d0c8;
  }

  .swatch,
  .hatch {
    display: block;
    width: 19px;
    height: 8px;
    margin: 0 auto;
  }

  .hatch {
    width: 24px;
    border: 1px solid #888;
    background: repeating-linear-gradient(45deg, #fff 0 3px, #888 3px 4px);
  }

  .scale-cell {
    position: relative;
    padding: 0;
  }

  select {
    display: block;
    width: 100%;
    height: 12px;
    padding-left: 2px;
    appearance: none;
    background:
      linear-gradient(#000, #000) right 4px top 5px / 5px 1px no-repeat,
      linear-gradient(#000, #000) right 5px top 6px / 3px 1px no-repeat,
      linear-gradient(#d4d0c8, #b8b4ac) right / 12px 12px no-repeat,
      #fff;
    border: 1px solid #888;
  }

  .options {
    position: absolute;
    z-index: 1;
    top: 13px;
    left: 0;
    right: 0;
    margin: 0;
    padding: 0;
    list-style: none;
    background: #fff;
    border: 1px solid #222;
  }

  .options li {
    height: 9px;
    padding-left: 1px;
    line-height: 9px;
  }

  .options .selected {
    color: #fff;
    background: #0a246a;
  }

  .cursor {
    position: absolute;
    z-index: 2;
    top: 4px;
    right: -1px;
    width: 9px;
    height: 14px;
  }

  .answers {
    display: flex;
    flex-direction: column;
    gap: 7px;
  }

  .answers button,
  .actions button {
    width: 68px;
    height: 16px;
    background: #d4d0c8;
    border: 1px solid #fff;
    border-right-color: #505050;
    border-bottom-color: #505050;
    box-shadow: inset -1px -1px 0 #909090;
  }

  .answers .default {
    border: 1px solid #202020;
    box-shadow: inset -1px -1px 0 #606060, inset 1px 1px 0 #fff;
  }

  .actions {
    display: flex;
    justify-content: space-between;
    padding: 8px 6px 6px;
  }
</style>
